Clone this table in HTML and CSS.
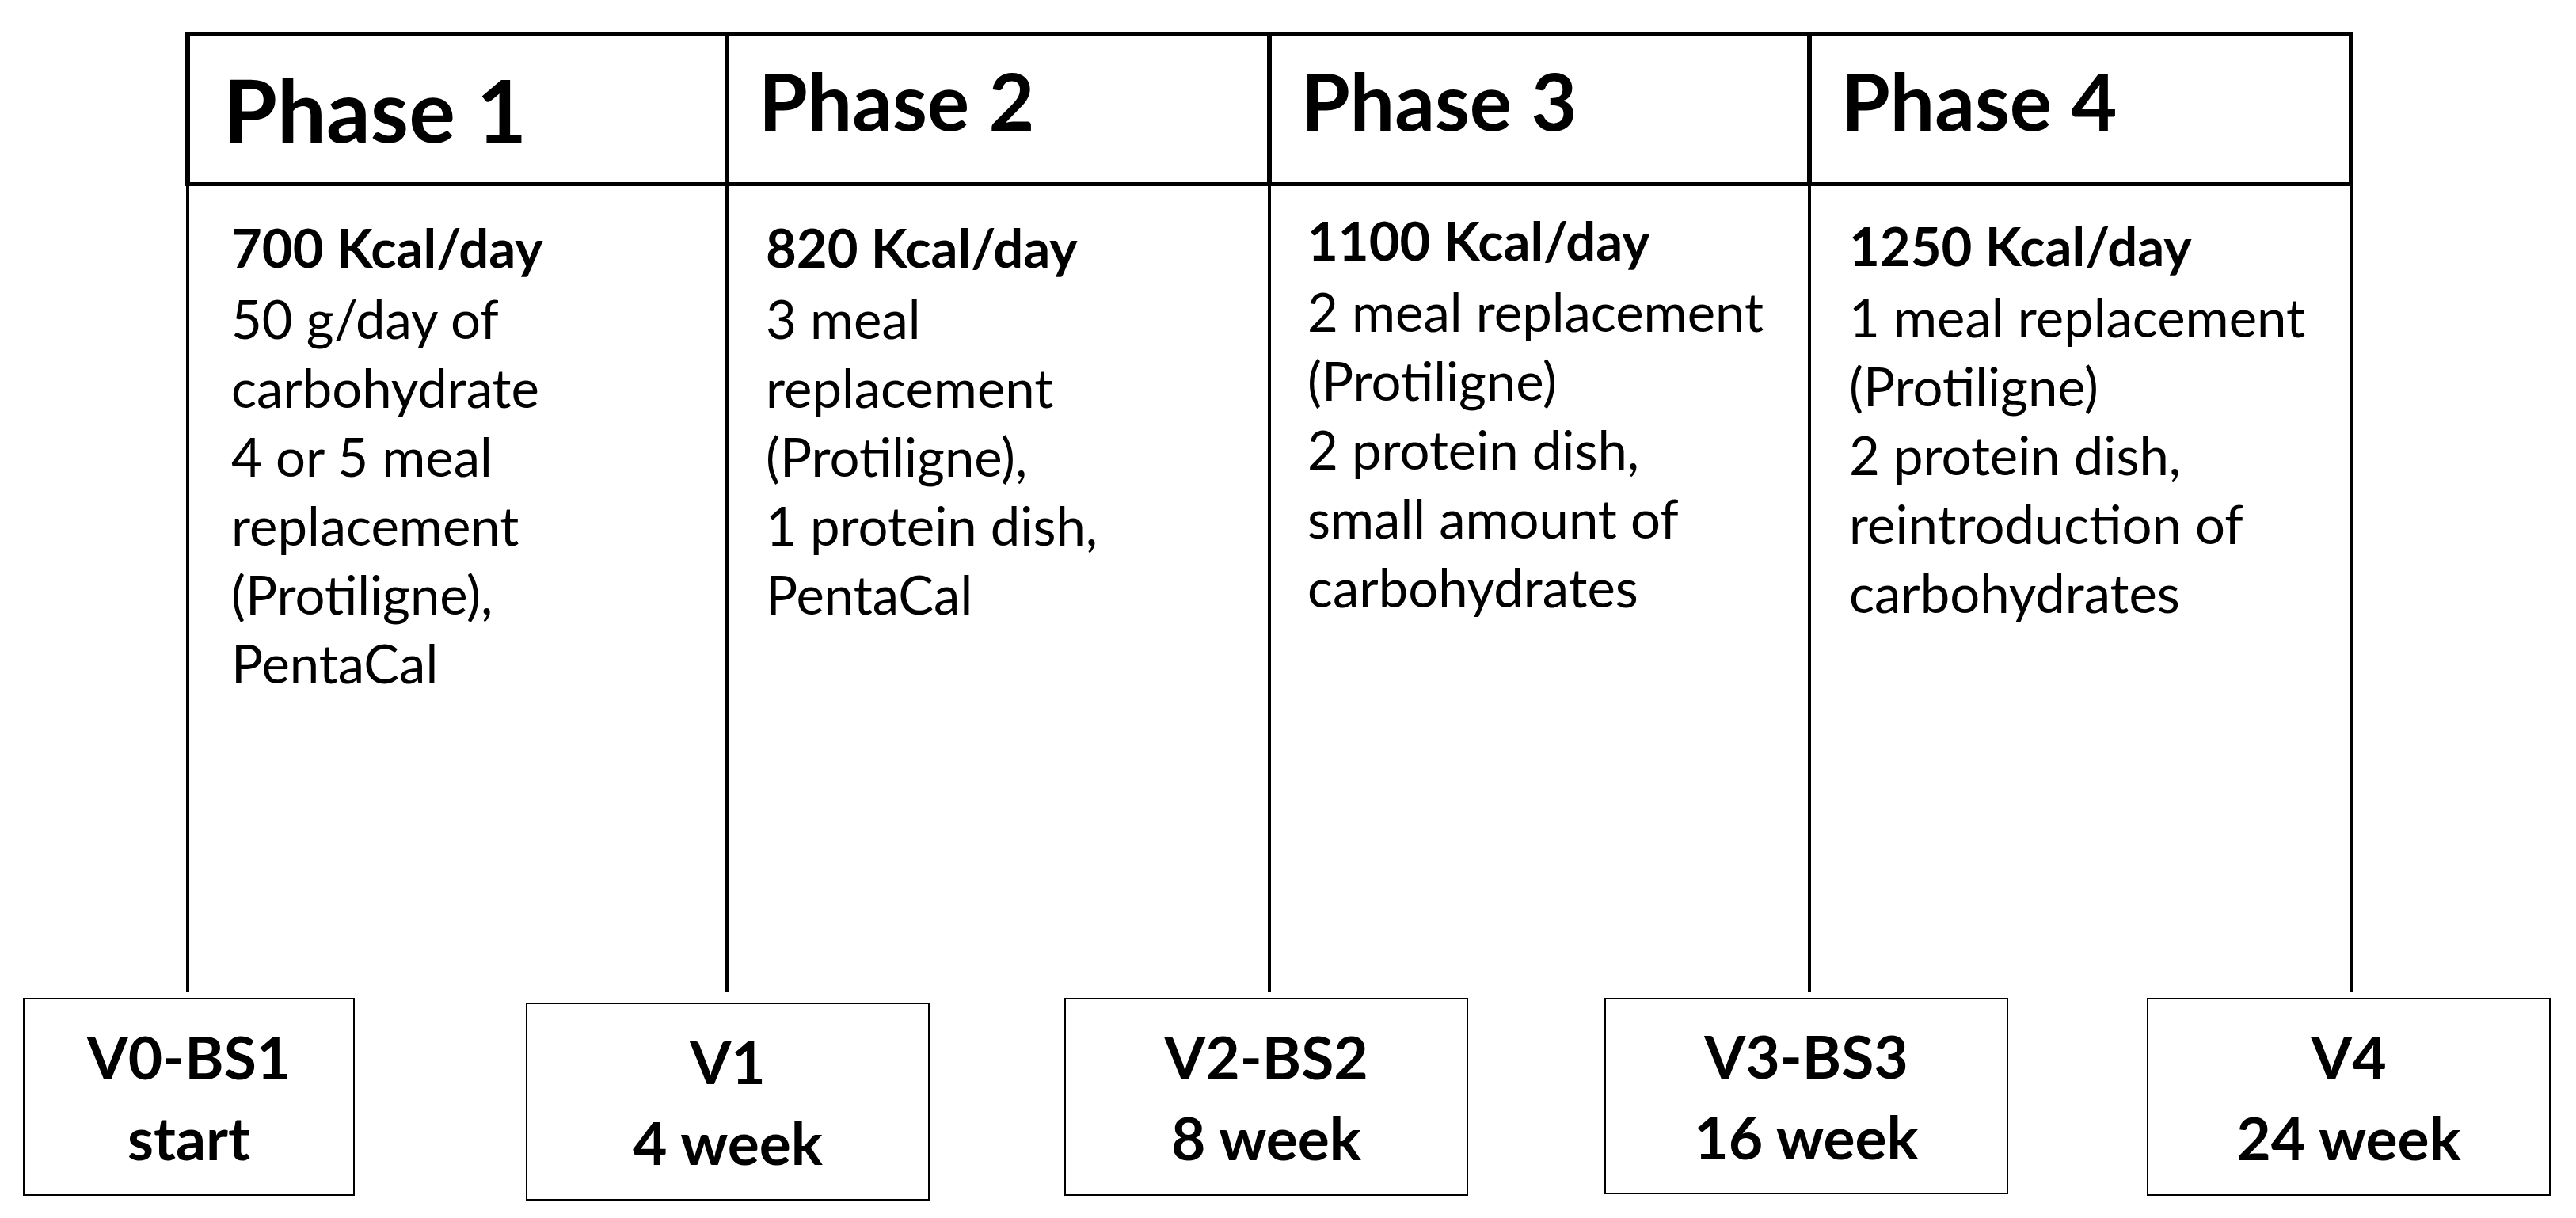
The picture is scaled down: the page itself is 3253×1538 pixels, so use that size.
FILE: index.html
```html
<!DOCTYPE html>
<html lang="en">
<head>
<meta charset="utf-8">
<title>Diet phases timeline</title>
<link rel="stylesheet" href="styles.css">
</head>
<body>
<main class="chart">
  <section class="phases">
    <div class="head head-1"><h2 class="phase-title phase-title-big">Phase 1</h2></div>
    <div class="head head-2"><h2 class="phase-title">Phase 2</h2></div>
    <div class="head head-3"><h2 class="phase-title">Phase 3</h2></div>
    <div class="head head-4 head-last"><h2 class="phase-title">Phase 4</h2></div>

    <div class="body body-1">
      <div class="kcal">700 Kcal/day</div>
      <div class="line">50 g/day of</div>
      <div class="line">carbohydrate</div>
      <div class="line">4 or 5 meal</div>
      <div class="line">replacement</div>
      <div class="line">(Protiligne),</div>
      <div class="line">PentaCal</div>
    </div>
    <div class="body body-2">
      <div class="kcal">820 Kcal/day</div>
      <div class="line">3 meal</div>
      <div class="line">replacement</div>
      <div class="line">(Protiligne),</div>
      <div class="line">1 protein dish,</div>
      <div class="line">PentaCal</div>
    </div>
    <div class="body body-3">
      <div class="kcal">1100 Kcal/day</div>
      <div class="line">2 meal replacement</div>
      <div class="line">(Protiligne)</div>
      <div class="line">2 protein dish,</div>
      <div class="line">small amount of</div>
      <div class="line">carbohydrates</div>
    </div>
    <div class="body body-4 body-last">
      <div class="kcal">1250 Kcal/day</div>
      <div class="line">1 meal replacement</div>
      <div class="line">(Protiligne)</div>
      <div class="line">2 protein dish,</div>
      <div class="line">reintroduction of</div>
      <div class="line">carbohydrates</div>
    </div>
  </section>

  <section class="visits">
    <div class="visit visit-0"><span>V0-BS1</span><span>start</span></div>
    <div class="visit visit-1"><span>V1</span><span>4 week</span></div>
    <div class="visit visit-2"><span>V2-BS2</span><span>8 week</span></div>
    <div class="visit visit-3"><span>V3-BS3</span><span>16 week</span></div>
    <div class="visit visit-4"><span>V4</span><span>24 week</span></div>
  </section>
</main>
</body>
</html>
```

FILE: styles.css
```css
html, body {
  margin: 0;
  padding: 0;
  background: #ffffff;
}

body {
  width: 3253px;
  height: 1538px;
  overflow: hidden;
  font-family: Lato, "Open Sans", "Liberation Sans", sans-serif;
  color: #000;
}

.chart {
  padding-top: 40px;
}

.phases {
  margin-left: 234px;
  width: 2738px;
  display: grid;
  grid-template-columns: 681px 685px 682px 690px;
  grid-template-rows: 195px 1018px;
}

.head {
  border-top: 6px solid #000;
  border-left: 6px solid #000;
  border-bottom: 5px solid #000;
  box-sizing: border-box;
  padding-left: 37px;
}

.head-last {
  border-right: 6px solid #000;
}

.phase-title {
  margin: 0;
  font-weight: 700;
  font-size: 100px;
  line-height: 1;
  white-space: nowrap;
  padding-top: 30px;
}

.phase-title-big {
  font-size: 110px;
  padding-top: 36px;
}

.head-1 { padding-left: 42px; }

.body {
  border-left: 4px solid #000;
  margin-left: 1px;
  box-sizing: border-box;
  padding-left: 46px;
  padding-top: 34px;
  font-size: 67px;
  line-height: 87px;
  white-space: nowrap;
}

.body-1 { padding-left: 53px; }
.body-2 { padding-left: 47px; }
.body-3 { padding-top: 25px; }
.body-4 { padding-top: 32px; padding-left: 48px; }

.body-last {
  border-right: 4px solid #000;
  margin-right: 1px;
}

.kcal {
  font-weight: 700;
  margin-bottom: 3px;
}

.visits {
  display: flex;
  align-items: flex-start;
  padding-left: 29px;
  margin-top: 7px;
}

.visit {
  box-sizing: border-box;
  width: 510px;
  height: 250px;
  border: 2px solid #000;
  display: flex;
  flex-direction: column;
  justify-content: center;
  align-items: center;
  font-weight: 700;
  font-size: 75px;
  line-height: 102px;
  white-space: nowrap;
}

.visit-0 { width: 419px; }
.visit-1 { margin-left: 216px; margin-top: 6px; }
.visit-2 { margin-left: 170px; }
.visit-3 { margin-left: 172px; height: 248px; }
.visit-4 { margin-left: 175px; }
```
